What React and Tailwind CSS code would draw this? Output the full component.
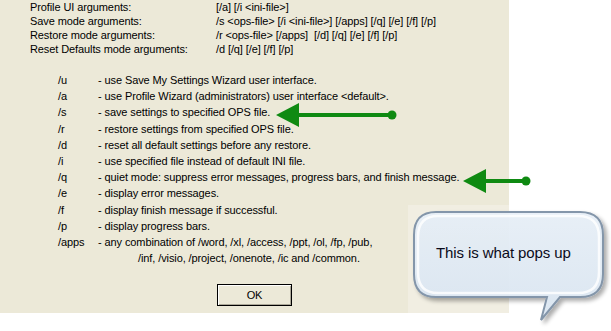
import React from 'react';

const headerRows = [
  ['Profile UI arguments:', '[/a] [/i <ini-file>]'],
  ['Save mode arguments:', '/s <ops-file> [/i <ini-file>] [/apps] [/q] [/e] [/f] [/p]'],
  ['Restore mode arguments:', '/r <ops-file> [/apps]  [/d] [/q] [/e] [/f] [/p]'],
  ['Reset Defaults mode arguments:', '/d [/q] [/e] [/f] [/p]'],
];

const switches = [
  ['/u', '- use Save My Settings Wizard user interface.'],
  ['/a', '- use Profile Wizard (administrators) user interface <default>.'],
  ['/s', '- save settings to specified OPS file.'],
  ['/r', '- restore settings from specified OPS file.'],
  ['/d', '- reset all default settings before any restore.'],
  ['/i', '- use specified file instead of default INI file.'],
  ['/q', '- quiet mode: suppress error messages, progress bars, and finish message.'],
  ['/e', '- display error messages.'],
  ['/f', '- display finish message if successful.'],
  ['/p', '- display progress bars.'],
  ['/apps', '- any combination of /word, /xl, /access, /ppt, /ol, /fp, /pub,'],
];

// flecha verde que apunta a la izquierda; len = distancia de la punta al punto
const Arrow = ({ className, len }) => (
  <svg className={className} width={len + 6} height="26" viewBox={`0 0 ${len + 6} 26`}>
    <path d={`M1 13 L24 1 L24 11 L${len} 11 L${len} 15 L24 15 L24 25 Z`} fill="#0f8a12" />
    <circle cx={len} cy="13" r="4.5" fill="#0f8a12" />
  </svg>
);

const Bubble = () => (
  <div className="absolute left-[408px] top-[206px] w-[203px] h-[122px]">
    <svg className="absolute inset-0" width="203" height="122" viewBox="0 0 203 122">
      <defs>
        <linearGradient id="fillG" x1="0" y1="0" x2="0" y2="1">
          <stop offset="0" stopColor="#e9f1f9" />
          <stop offset="1" stopColor="#dbe7f3" />
        </linearGradient>
        <filter id="sh" x="-10%" y="-10%" width="130%" height="140%">
          <feGaussianBlur in="SourceAlpha" stdDeviation="2" />
          <feOffset dx="3" dy="3" />
          <feComponentTransfer>
            <feFuncA type="linear" slope="0.35" />
          </feComponentTransfer>
          <feMerge>
            <feMergeNode />
            <feMergeNode in="SourceGraphic" />
          </feMerge>
        </filter>
      </defs>
      <path
        d="M28 6 H172 Q195 6 195 29 V68 Q195 91 172 91 H152 L133 114 L139 91 H28 Q6 91 6 68 V29 Q6 6 28 6 Z"
        fill="url(#fillG)"
        fillOpacity="0.92"
        stroke="#8496aa"
        strokeWidth="2"
        filter="url(#sh)"
      />
      <path
        d="M30 10 H170 Q191 10 191 31 V66 Q191 87 170 87 H30 Q10 87 10 66 V31 Q10 10 30 10 Z"
        fill="none"
        stroke="#ffffff"
        strokeOpacity="0.8"
        strokeWidth="2.5"
      />
    </svg>
    <p className="absolute left-[28px] top-[38px] text-[15px] leading-[18px] text-[#0a0a1a] font-['Liberation_Sans',Arial,sans-serif]">
      This is what pops up
    </p>
  </div>
);

export default function App() {
  return (
    <div className="relative w-[611px] h-[331px] bg-white overflow-hidden font-['Liberation_Sans',Tahoma,sans-serif] text-[11px] tracking-[-0.1px] text-black">
      <div className="w-[509px] h-[313px] bg-[#ece9d8] flex flex-col">
        {/* Argumentos */}
        <div className="pl-[30px] leading-[14px]">
          {headerRows.map(([label, args]) => (
            <div key={label} className="flex">
              <span className="w-[186px] shrink-0">{label}</span>
              <span className="whitespace-pre">{args}</span>
            </div>
          ))}
        </div>

        {/* Lista de opciones */}
        <div className="mt-[16px] pl-[58px] leading-[16.2px]">
          {switches.map(([sw, desc]) => (
            <div key={sw} className="flex">
              <span className="w-[40px] shrink-0">{sw}</span>
              <span>{desc}</span>
            </div>
          ))}
          <div className="pl-[80px] leading-[17px]">
            /inf, /visio, /project, /onenote, /ic and /common.
          </div>
        </div>

        <button className="mt-[17px] mx-auto w-[75px] h-[22px] bg-[#ece9d8] border border-black shadow-[inset_1px_1px_0_#ffffff,inset_-1px_-1px_0_#aca899] text-[11px] leading-none">
          OK
        </button>
      </div>

      <div className="absolute left-[408px] top-[205px] w-[101px] h-[108px] bg-white/25" />

      <Arrow className="absolute left-[275px] top-[102px]" len={117} />
      <Arrow className="absolute left-[462px] top-[168px]" len={64} />
      <Bubble />
    </div>
  );
}
